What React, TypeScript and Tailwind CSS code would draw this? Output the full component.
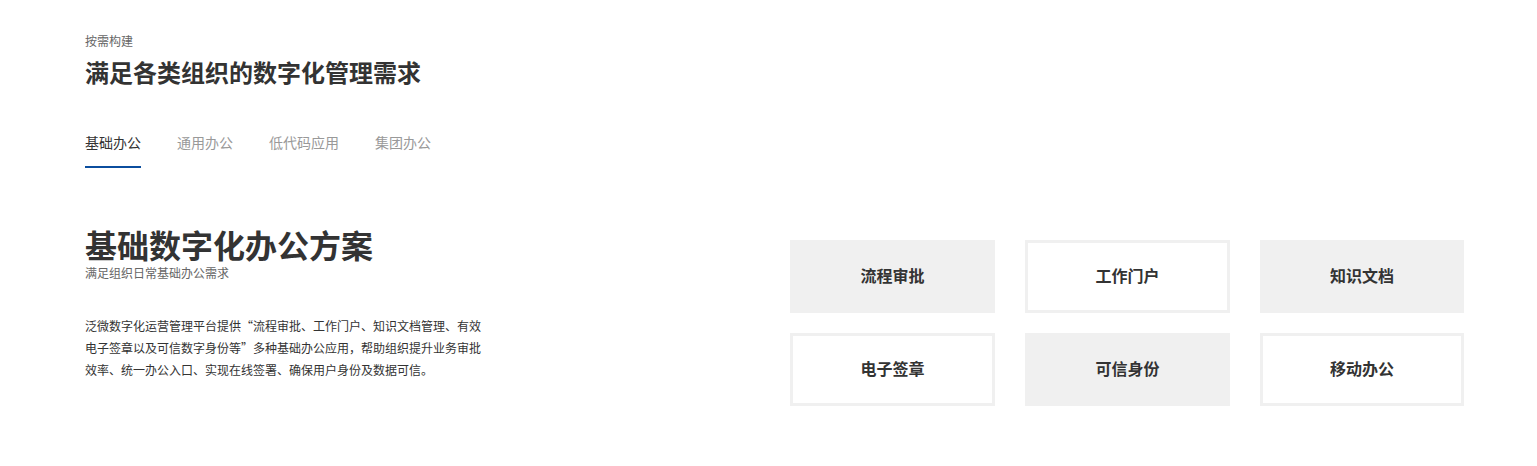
import React from "react";

const cards = [
  { t: "流程审批", filled: true },
  { t: "工作门户", filled: false },
  { t: "知识文档", filled: true },
  { t: "电子签章", filled: false },
  { t: "可信身份", filled: true },
  { t: "移动办公", filled: false },
];

const tabs = ["基础办公", "通用办公", "低代码应用", "集团办公"];

export default function App() {
  return (
    <div
      className="w-[1537px] h-[466px] bg-white text-[#333] overflow-hidden"
      style={{ fontFamily: '"Noto Sans CJK SC", "Noto Sans", sans-serif' }}
    >
      <div className="pl-[85px] pt-[33px]">
        <div className="text-[12px] leading-[16px] text-[#666]">按需构建</div>
        <div className="mt-[7px] text-[24px] leading-[32px] font-bold text-[#333]">
          满足各类组织的数字化管理需求
        </div>
        <div className="mt-[44px] flex gap-[36px]">
          {tabs.map((t, i) => (
            <div
              key={t}
              className={
                i === 0
                  ? "text-[14px] leading-[20px] pb-[14px] border-b-2 border-[#0b4e9e] text-[#333]"
                  : "text-[14px] leading-[20px] pb-[14px] border-b-2 border-transparent text-[#999]"
              }
            >
              {t}
            </div>
          ))}
        </div>
        <div className="mt-[57px] flex">
          <div className="w-[705px] shrink-0">
            <div className="-mt-[1px] text-[32px] leading-[40px] font-bold text-[#333]">基础数字化办公方案</div>
            <div className="mt-[1px] text-[12px] leading-[16px] text-[#666]">满足组织日常基础办公需求</div>
            <div className="mt-[34px] w-[400px] text-[12px] leading-[22px] text-[#333]">
              泛微数字化运营管理平台提供“流程审批、工作门户、知识文档管理、有效电子签章以及可信数字身份等”多种基础办公应用，帮助组织提升业务审批效率、统一办公入口、实现在线签署、确保用户身份及数据可信。
            </div>
          </div>
          <div className="mt-[15px] grid grid-cols-[205px_205px_204px] gap-x-[30px] gap-y-[20px]">
            {cards.map((c) => (
              <div
                key={c.t}
                className={
                  c.filled
                    ? "h-[73px] pb-[3px] bg-[#f0f0f0] flex items-center justify-center text-[16px] font-bold text-[#333]"
                    : "h-[73px] pb-[3px] bg-white border-[3px] border-[#f0f0f0] flex items-center justify-center text-[16px] font-bold text-[#333]"
                }
              >
                {c.t}
              </div>
            ))}
          </div>
        </div>
      </div>
    </div>
  );
}
